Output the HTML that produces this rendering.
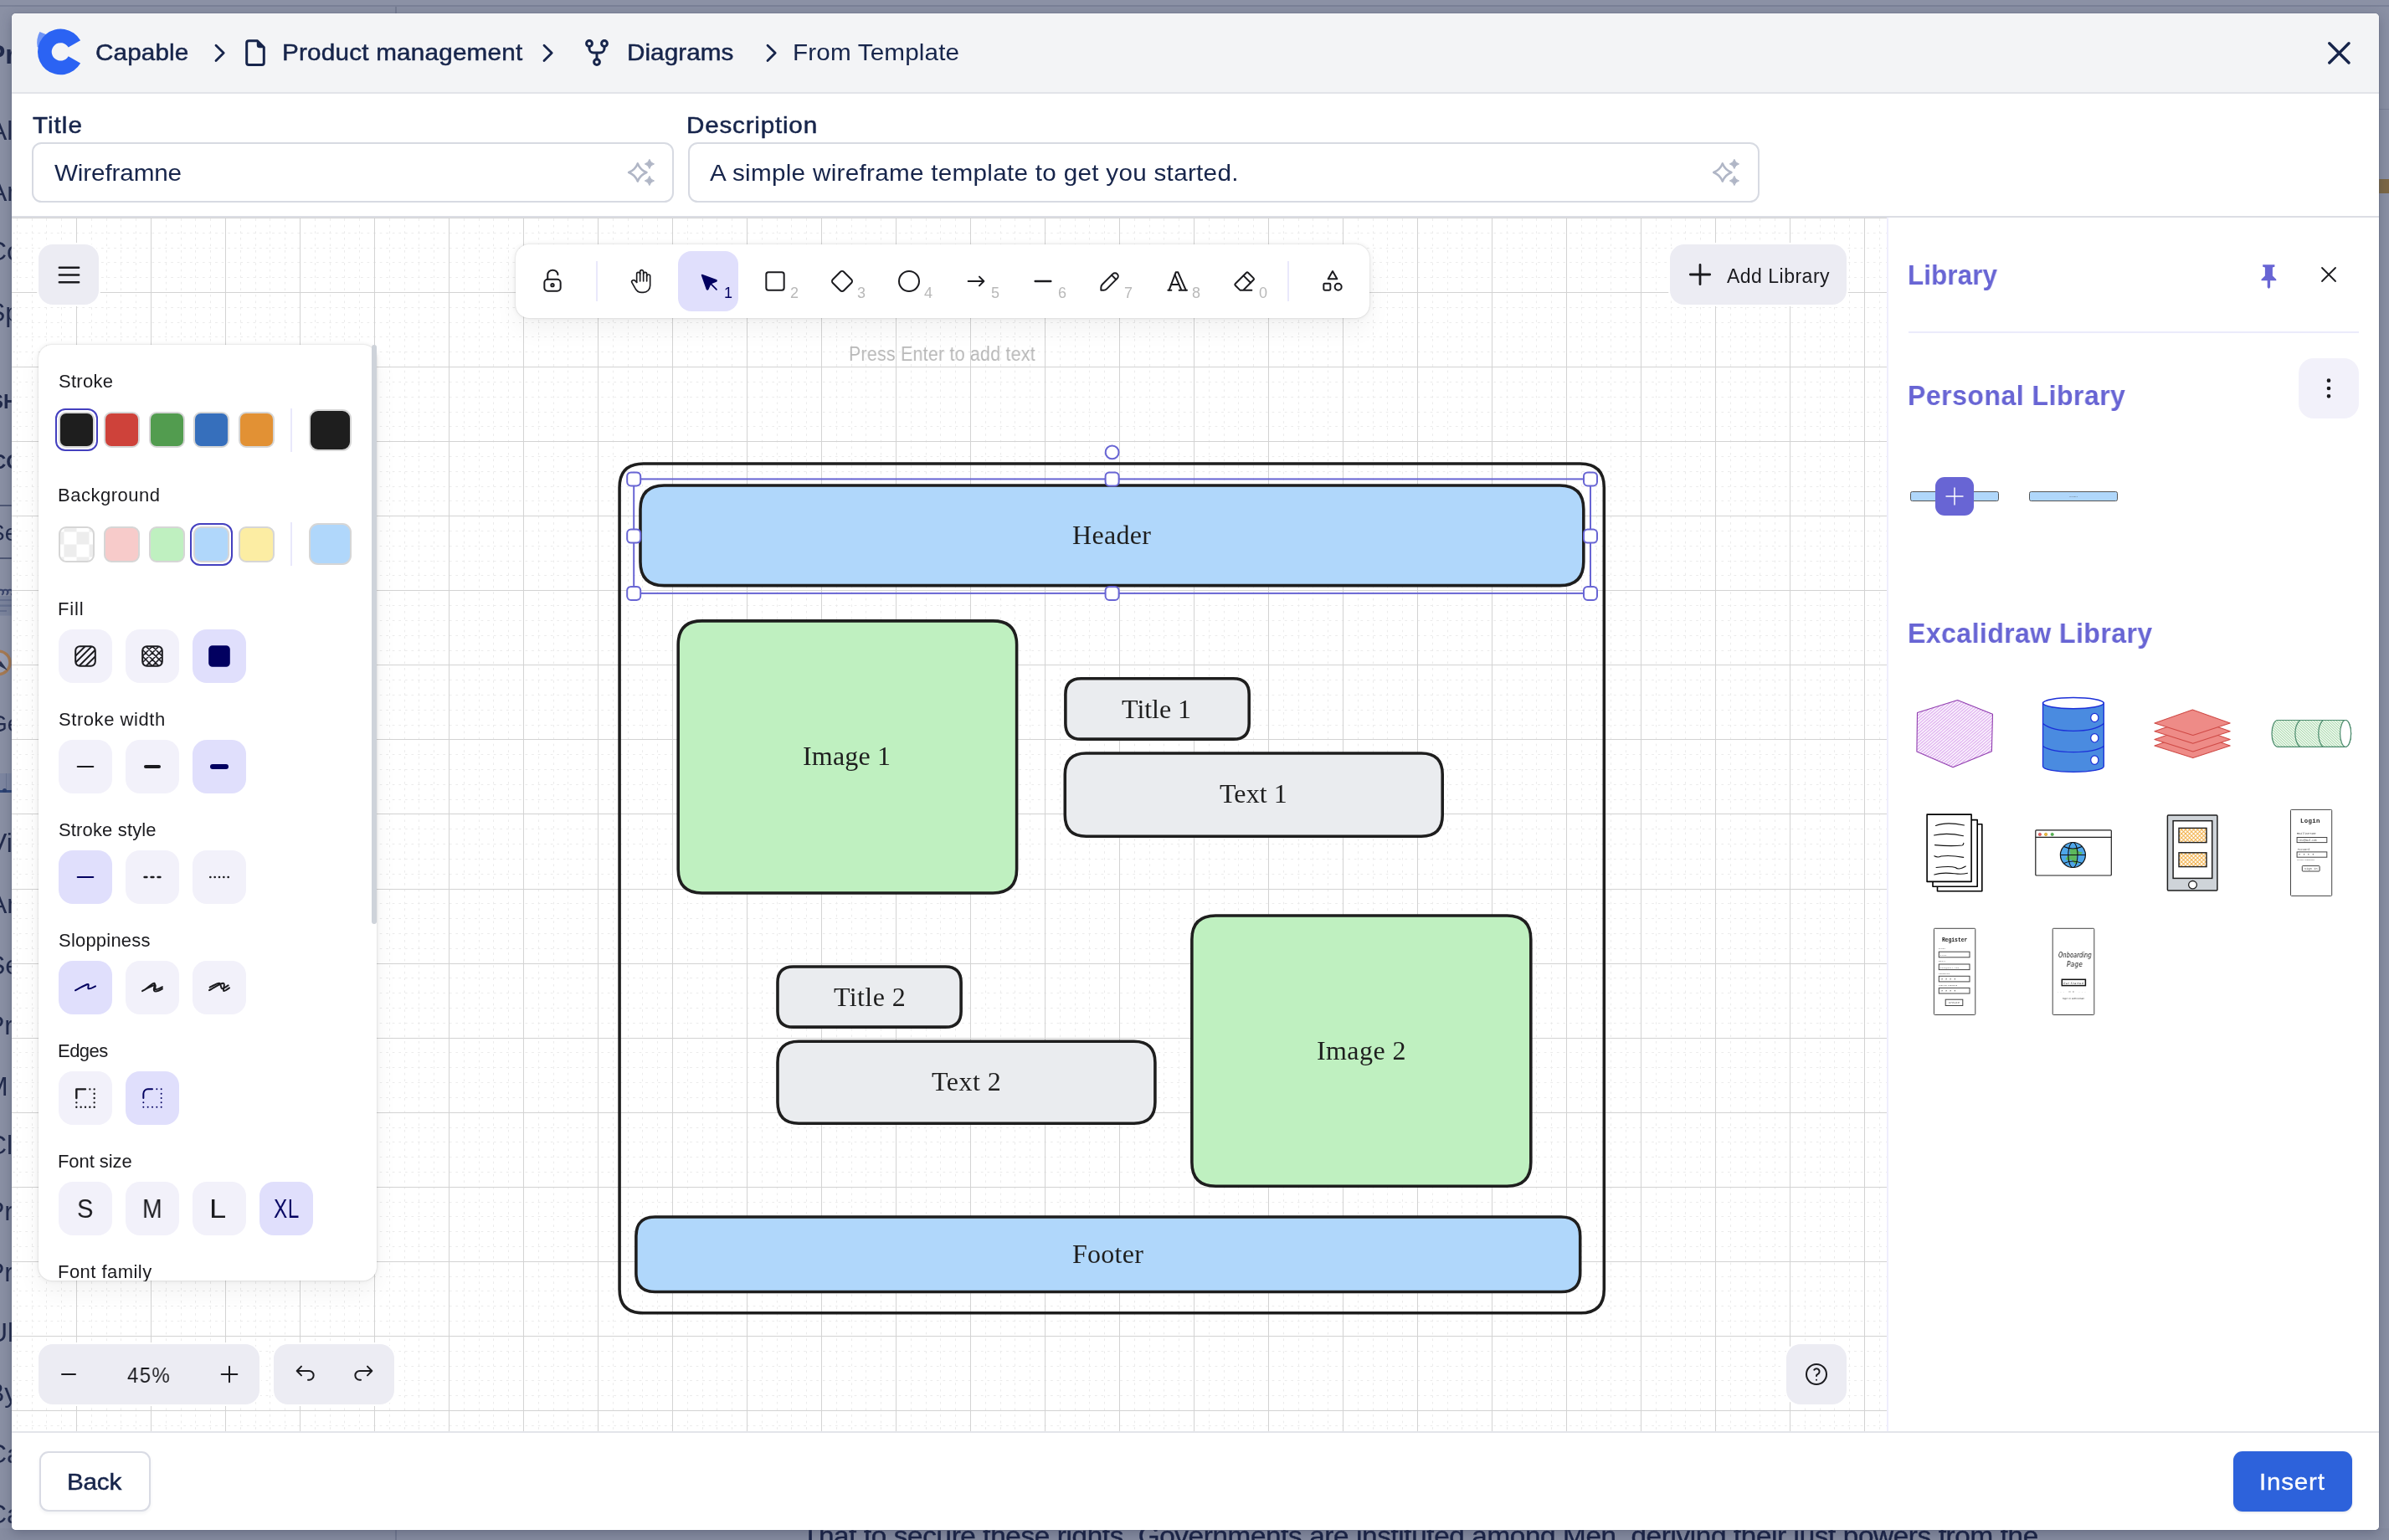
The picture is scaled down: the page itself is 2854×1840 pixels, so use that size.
<!DOCTYPE html>
<html lang="en"><head><meta charset="utf-8"><title>Capable - From Template</title>
<style>
html,body{margin:0;padding:0}
html{width:2854px;height:1840px;overflow:hidden}
#root{position:absolute;left:0;top:0;width:2854px;height:1840px;overflow:hidden}
body{width:2854px;height:1840px;overflow:hidden;background:#8a90a4;position:relative;font-family:"Liberation Sans",sans-serif}
.t{position:absolute;white-space:nowrap;will-change:transform}
svg{overflow:visible}
</style></head><body><div id="root">
<div style="position:absolute;left:0px;top:0px;width:2854px;height:1840px;background:#8a90a4;"></div>
<div style="position:absolute;left:0px;top:0px;width:2854px;height:6px;background:#8b91a5;"></div>
<div style="position:absolute;left:0px;top:6px;width:2854px;height:2px;background:#7a8197;"></div>
<div style="position:absolute;left:0px;top:1826px;width:2854px;height:14px;background:#868ca0;"></div>
<div style="position:absolute;left:472px;top:8px;width:2px;height:8px;background:#767d93;"></div>
<div style="position:absolute;left:472px;top:1828px;width:2px;height:12px;background:#727990;"></div>
<div style="position:absolute;left:2842px;top:130px;width:12px;height:1px;background:#7a8197;"></div>
<div style="position:absolute;left:2842px;top:214px;width:12px;height:17px;background:#7d6845;"></div>
<div style="position:absolute;left:0;top:0;width:14px;height:1840px;overflow:hidden">
<div class="t" style='left:-15.22px;top:46.00px;font-family:"Liberation Sans", sans-serif;font-size:32px;line-height:38px;color:#222b4c;font-weight:700;'>Pr</div>
<div class="t" style='left:-13.35px;top:137.00px;font-family:"Liberation Sans", sans-serif;font-size:32px;line-height:38px;color:#222b4c;'>Al</div>
<div class="t" style='left:-13.35px;top:209.50px;font-family:"Liberation Sans", sans-serif;font-size:32px;line-height:38px;color:#222b4c;'>Ar</div>
<div class="t" style='left:-14.66px;top:281.00px;font-family:"Liberation Sans", sans-serif;font-size:32px;line-height:38px;color:#222b4c;'>Co</div>
<div class="t" style='left:-14.77px;top:354.00px;font-family:"Liberation Sans", sans-serif;font-size:32px;line-height:38px;color:#222b4c;'>Sp</div>
<div class="t" style='left:-12.17px;top:465.00px;font-family:"Liberation Sans", sans-serif;font-size:24px;line-height:29px;color:#222b4c;font-weight:700;'>SH</div>
<div class="t" style='left:-10.13px;top:536.50px;font-family:"Liberation Sans", sans-serif;font-size:24px;line-height:29px;color:#222b4c;font-weight:700;'>CO</div>
<div style="position:absolute;left:0px;top:603px;width:14px;height:2px;background:#4f5875;"></div>
<div class="t" style='left:-12.52px;top:620.00px;font-family:"Liberation Sans", sans-serif;font-size:28px;line-height:34px;color:#222b4c;'>Se</div>
<div style="position:absolute;left:0px;top:666px;width:14px;height:2px;background:#4f5875;"></div>
<svg style="position:absolute;left:0px;top:700px;" width="14" height="40" viewBox="0 700 14 40"><path d="M-2 708a3 3 0 1 1 4 2.500M3.500 708a3 3 0 1 1 4 2.500M9 708a3 3 0 1 1 4 2.500" fill="none" stroke="#39446a" stroke-width="2"/><rect x="0" y="12" width="14" height="23.500" fill="#7b849c" transform="translate(0,700)"/><path d="M0 717H14M0 723.600H14M0 730H8" stroke="#66708e" stroke-width="2.200"/></svg>
<svg style="position:absolute;left:0px;top:770px;" width="14" height="44" viewBox="0 770 14 44"><circle cx="-1.800" cy="791.800" r="13.800" fill="#9ba1b5" stroke="#a67a52" stroke-width="3.400"/><path d="M-9 783L1 790L-3.500 794Z" fill="#b8324c"/><path d="M9 801L1 790L-3.500 794Z" fill="#2a3350"/></svg>
<div class="t" style='left:-13.47px;top:847.50px;font-family:"Liberation Sans", sans-serif;font-size:28px;line-height:34px;color:#222b4c;'>Ge</div>
<div style="position:absolute;left:0px;top:924px;width:14px;height:21px;background:#7d86a0;"></div>
<div style="position:absolute;left:6.5px;top:924px;width:1px;height:20px;background:#6c7692;"></div>
<div style="position:absolute;left:0px;top:944px;width:14px;height:2.5px;background:#2f4779;"></div>
<div style="position:absolute;left:3px;top:942px;width:5px;height:5px;background:#2b3f6e;border-radius:50%;"></div>
<div class="t" style='left:-13.41px;top:988.00px;font-family:"Liberation Sans", sans-serif;font-size:32px;line-height:38px;color:#222b4c;'>Vi</div>
<div class="t" style='left:-13.35px;top:1061.00px;font-family:"Liberation Sans", sans-serif;font-size:32px;line-height:38px;color:#222b4c;'>Ar</div>
<div class="t" style='left:-14.77px;top:1134.00px;font-family:"Liberation Sans", sans-serif;font-size:32px;line-height:38px;color:#222b4c;'>Se</div>
<div class="t" style='left:-15.66px;top:1206.00px;font-family:"Liberation Sans", sans-serif;font-size:32px;line-height:38px;color:#222b4c;'>Pr</div>
<div class="t" style='left:-16.66px;top:1279.00px;font-family:"Liberation Sans", sans-serif;font-size:32px;line-height:38px;color:#222b4c;'>M</div>
<div class="t" style='left:-14.66px;top:1349.00px;font-family:"Liberation Sans", sans-serif;font-size:32px;line-height:38px;color:#222b4c;'>Cl</div>
<div class="t" style='left:-15.66px;top:1428.00px;font-family:"Liberation Sans", sans-serif;font-size:32px;line-height:38px;color:#222b4c;'>Pr</div>
<div class="t" style='left:-15.66px;top:1501.00px;font-family:"Liberation Sans", sans-serif;font-size:32px;line-height:38px;color:#222b4c;'>Pr</div>
<div class="t" style='left:-14.50px;top:1573.00px;font-family:"Liberation Sans", sans-serif;font-size:32px;line-height:38px;color:#222b4c;'>Ul</div>
<div class="t" style='left:-15.66px;top:1645.00px;font-family:"Liberation Sans", sans-serif;font-size:32px;line-height:38px;color:#222b4c;'>By</div>
<div class="t" style='left:-14.66px;top:1718.00px;font-family:"Liberation Sans", sans-serif;font-size:32px;line-height:38px;color:#222b4c;'>Ca</div>
<div class="t" style='left:-14.66px;top:1790.00px;font-family:"Liberation Sans", sans-serif;font-size:32px;line-height:38px;color:#222b4c;'>Ca</div>
</div>
<div class="t" style='left:957.97px;top:1815.50px;font-family:"Liberation Sans", sans-serif;font-size:32px;line-height:38px;color:#1a2346;letter-spacing:-0.360px;-webkit-text-stroke:0.4px #1a2346;transform:scaleX(1.04);transform-origin:0 0;'>That to secure these rights, Governments are instituted among Men, deriving their just powers from the</div>
<div style="position:absolute;left:14px;top:16px;width:2828px;height:1812px;border-radius:5px;overflow:hidden;background:#fff;box-shadow:0 0 0 1px rgba(90,98,122,.25),0 4px 14px rgba(35,42,70,.30)">
<div style="position:absolute;left:-14px;top:-16px;width:2854px;height:1840px">
<div style="position:absolute;left:14px;top:16px;width:2828px;height:94px;background:#f3f4f6;"></div>
<div style="position:absolute;left:14px;top:110px;width:2828px;height:2px;background:#e2e4e9;"></div>
<svg style="position:absolute;left:0px;top:0px;" width="130" height="110" viewBox="0 0 130 110"><path d="M47.4 38.1L55.5 41.2L52 60L44.6 56Q43 46.5 47.4 38.1Z" fill="#6e94f6"/><path d="M96.13 48.20A27.4 27.4 0 1 0 96.13 75.60L81.67 67.25A10.7 10.7 0 1 1 81.67 56.55Z" fill="#2b63f3"/></svg>
<div class="t" style='left:113.64px;top:46.00px;font-family:"Liberation Sans", sans-serif;font-size:28px;line-height:34px;color:#17254b;letter-spacing:0.110px;-webkit-text-stroke:0.5px #17254b;transform:scaleX(1.06);transform-origin:0 0;'>Capable</div>
<svg style="position:absolute;left:256px;top:50px;" width="16" height="26" viewBox="0 0 16 26"><path d="M2 4.2L11.2 13.3L2 22.4" fill="none" stroke="#17254b" stroke-width="2.8" stroke-linecap="round" stroke-linejoin="round"/></svg>
<svg style="position:absolute;left:288px;top:42px;" width="34" height="42" viewBox="0 0 34 42"><path d="M6.7 9.2a2.5 2.5 0 0 1 2.5-2.5H19.5L27.3 14.5V33a2.5 2.5 0 0 1-2.5 2.5H9.2a2.5 2.5 0 0 1-2.5-2.5Z" fill="none" stroke="#17254b" stroke-width="3" stroke-linejoin="round"/><path d="M19.5 6.7L27.3 14.5H22a2.5 2.5 0 0 1-2.5-2.5Z" fill="#17254b" stroke="#17254b" stroke-width="1.5" stroke-linejoin="round"/></svg>
<div class="t" style='left:336.69px;top:46.00px;font-family:"Liberation Sans", sans-serif;font-size:28px;line-height:34px;color:#17254b;letter-spacing:0.189px;-webkit-text-stroke:0.5px #17254b;transform:scaleX(1.06);transform-origin:0 0;'>Product management</div>
<svg style="position:absolute;left:648px;top:50px;" width="16" height="26" viewBox="0 0 16 26"><path d="M2 4.2L11.2 13.3L2 22.4" fill="none" stroke="#17254b" stroke-width="2.8" stroke-linecap="round" stroke-linejoin="round"/></svg>
<svg style="position:absolute;left:694px;top:42px;" width="40" height="42" viewBox="0 0 40 42"><g fill="none" stroke="#17254b" stroke-width="3" stroke-linecap="round"><circle cx="10" cy="10" r="3.4"/><circle cx="28" cy="10" r="3.4"/><circle cx="19" cy="32.1" r="3.4"/><path d="M10 13.4V16a5 5 0 0 0 5 5H23a5 5 0 0 0 5-5V13.4M19 21V28.7"/></g></svg>
<div class="t" style='left:748.69px;top:46.00px;font-family:"Liberation Sans", sans-serif;font-size:28px;line-height:34px;color:#17254b;letter-spacing:0.045px;-webkit-text-stroke:0.5px #17254b;transform:scaleX(1.06);transform-origin:0 0;'>Diagrams</div>
<svg style="position:absolute;left:915px;top:50px;" width="16" height="26" viewBox="0 0 16 26"><path d="M2 4.2L11.2 13.3L2 22.4" fill="none" stroke="#17254b" stroke-width="2.8" stroke-linecap="round" stroke-linejoin="round"/></svg>
<div class="t" style='left:946.80px;top:46.00px;font-family:"Liberation Sans", sans-serif;font-size:28px;line-height:34px;color:#17254b;letter-spacing:0.137px;transform:scaleX(1.06);transform-origin:0 0;'>From Template</div>
<svg style="position:absolute;left:2776px;top:45px;" width="36" height="36" viewBox="0 0 36 36"><path d="M6.8 6.8L30 30M30 6.8L6.8 30" fill="none" stroke="#17254b" stroke-width="3.4" stroke-linecap="round"/></svg>
<div style="position:absolute;left:14px;top:112px;width:2828px;height:146px;background:#fff;"></div>
<div class="t" style='left:38.58px;top:132.80px;font-family:"Liberation Sans", sans-serif;font-size:28px;line-height:34px;color:#17254b;letter-spacing:0.930px;-webkit-text-stroke:0.5px #17254b;transform:scaleX(1.06);transform-origin:0 0;'>Title</div>
<div class="t" style='left:820.19px;top:132.80px;font-family:"Liberation Sans", sans-serif;font-size:28px;line-height:34px;color:#17254b;letter-spacing:0.724px;-webkit-text-stroke:0.5px #17254b;transform:scaleX(1.06);transform-origin:0 0;'>Description</div>
<div style="position:absolute;left:38px;top:170px;width:767px;height:72px;box-sizing:border-box;border:2px solid #d7dae2;border-radius:11.5px;background:#fff;"></div>
<div style="position:absolute;left:822px;top:170px;width:1280px;height:72px;box-sizing:border-box;border:2px solid #d7dae2;border-radius:11.5px;background:#fff;"></div>
<div class="t" style='left:64.83px;top:189.50px;font-family:"Liberation Sans", sans-serif;font-size:28px;line-height:34px;color:#17254b;letter-spacing:-0.131px;transform:scaleX(1.06);transform-origin:0 0;'>Wireframne</div>
<div class="t" style='left:848.43px;top:189.50px;font-family:"Liberation Sans", sans-serif;font-size:28px;line-height:34px;color:#17254b;letter-spacing:0.263px;transform:scaleX(1.06);transform-origin:0 0;'>A simple wireframe template to get you started.</div>
<svg style="position:absolute;left:740px;top:180px;" width="50" height="50" viewBox="0 0 50 50"><path d="M21.80 15.40Q24.77 23.03 32.40 26.00Q24.77 28.97 21.80 36.60Q18.83 28.97 11.20 26.00Q18.83 23.03 21.80 15.40Z" fill="none" stroke="#b0b6c6" stroke-width="2.6" stroke-linejoin="round"/><path d="M35.90 10.30Q37.02 14.78 41.50 15.90Q37.02 17.02 35.90 21.50Q34.78 17.02 30.30 15.90Q34.78 14.78 35.90 10.30Z" fill="#b0b6c6" stroke="#b0b6c6" stroke-width="1" stroke-linejoin="round"/><path d="M35.90 30.40Q37.02 34.88 41.50 36.00Q37.02 37.12 35.90 41.60Q34.78 37.12 30.30 36.00Q34.78 34.88 35.90 30.40Z" fill="#b0b6c6" stroke="#b0b6c6" stroke-width="1" stroke-linejoin="round"/></svg>
<svg style="position:absolute;left:2036px;top:180px;" width="50" height="50" viewBox="0 0 50 50"><path d="M21.80 15.40Q24.77 23.03 32.40 26.00Q24.77 28.97 21.80 36.60Q18.83 28.97 11.20 26.00Q18.83 23.03 21.80 15.40Z" fill="none" stroke="#b0b6c6" stroke-width="2.6" stroke-linejoin="round"/><path d="M35.90 10.30Q37.02 14.78 41.50 15.90Q37.02 17.02 35.90 21.50Q34.78 17.02 30.30 15.90Q34.78 14.78 35.90 10.30Z" fill="#b0b6c6" stroke="#b0b6c6" stroke-width="1" stroke-linejoin="round"/><path d="M35.90 30.40Q37.02 34.88 41.50 36.00Q37.02 37.12 35.90 41.60Q34.78 37.12 30.30 36.00Q34.78 34.88 35.90 30.40Z" fill="#b0b6c6" stroke="#b0b6c6" stroke-width="1" stroke-linejoin="round"/></svg>
<div style="position:absolute;left:14px;top:258px;width:2828px;height:2px;background:#dcdee4;"></div>
<svg style="position:absolute;left:14px;top:260px;" width="2240" height="1451" viewBox="14 260 2240 1451"><rect x="14" y="260" width="2240" height="1451" fill="#fff"/><path d="M20.5 260V1711M38.5 260V1711M55.5 260V1711M73.5 260V1711M109.5 260V1711M127.5 260V1711M144.5 260V1711M162.5 260V1711M198.5 260V1711M216.5 260V1711M233.5 260V1711M251.5 260V1711M287.5 260V1711M305.5 260V1711M322.5 260V1711M340.5 260V1711M376.5 260V1711M394.5 260V1711M411.5 260V1711M429.5 260V1711M465.5 260V1711M483.5 260V1711M500.5 260V1711M518.5 260V1711M554.5 260V1711M572.5 260V1711M589.5 260V1711M607.5 260V1711M643.5 260V1711M661.5 260V1711M678.5 260V1711M696.5 260V1711M732.5 260V1711M750.5 260V1711M767.5 260V1711M785.5 260V1711M821.5 260V1711M839.5 260V1711M856.5 260V1711M874.5 260V1711M910.5 260V1711M928.5 260V1711M945.5 260V1711M963.5 260V1711M999.5 260V1711M1017.5 260V1711M1034.5 260V1711M1052.5 260V1711M1088.5 260V1711M1106.5 260V1711M1123.5 260V1711M1141.5 260V1711M1177.5 260V1711M1195.5 260V1711M1212.5 260V1711M1230.5 260V1711M1266.5 260V1711M1284.5 260V1711M1301.5 260V1711M1319.5 260V1711M1355.5 260V1711M1373.5 260V1711M1390.5 260V1711M1408.5 260V1711M1444.5 260V1711M1462.5 260V1711M1479.5 260V1711M1497.5 260V1711M1533.5 260V1711M1551.5 260V1711M1568.5 260V1711M1586.5 260V1711M1622.5 260V1711M1640.5 260V1711M1657.5 260V1711M1675.5 260V1711M1711.5 260V1711M1729.5 260V1711M1746.5 260V1711M1764.5 260V1711M1800.5 260V1711M1818.5 260V1711M1835.5 260V1711M1853.5 260V1711M1889.5 260V1711M1907.5 260V1711M1924.5 260V1711M1942.5 260V1711M1978.5 260V1711M1996.5 260V1711M2013.5 260V1711M2031.5 260V1711M2067.5 260V1711M2085.5 260V1711M2102.5 260V1711M2120.5 260V1711M2156.5 260V1711M2174.5 260V1711M2191.5 260V1711M2209.5 260V1711M2245.5 260V1711M14 278.5H2254M14 296.5H2254M14 313.5H2254M14 331.5H2254M14 367.5H2254M14 385.5H2254M14 402.5H2254M14 420.5H2254M14 456.5H2254M14 474.5H2254M14 492.5H2254M14 509.5H2254M14 545.5H2254M14 563.5H2254M14 581.5H2254M14 598.5H2254M14 634.5H2254M14 652.5H2254M14 670.5H2254M14 687.5H2254M14 723.5H2254M14 741.5H2254M14 759.5H2254M14 777.5H2254M14 812.5H2254M14 830.5H2254M14 848.5H2254M14 866.5H2254M14 901.5H2254M14 919.5H2254M14 937.5H2254M14 955.5H2254M14 990.5H2254M14 1008.5H2254M14 1026.5H2254M14 1044.5H2254M14 1079.5H2254M14 1097.5H2254M14 1115.5H2254M14 1133.5H2254M14 1168.5H2254M14 1186.5H2254M14 1204.5H2254M14 1222.5H2254M14 1257.5H2254M14 1275.5H2254M14 1293.5H2254M14 1311.5H2254M14 1347.5H2254M14 1364.5H2254M14 1382.5H2254M14 1400.5H2254M14 1436.5H2254M14 1453.5H2254M14 1471.5H2254M14 1489.5H2254M14 1525.5H2254M14 1542.5H2254M14 1560.5H2254M14 1578.5H2254M14 1614.5H2254M14 1632.5H2254M14 1649.5H2254M14 1667.5H2254M14 1703.5H2254" fill="none" stroke="#ebebeb" stroke-width="1" stroke-dasharray="2.7 4.86" stroke-dashoffset="-1.2"/><path d="M91.5 260V1711M180.5 260V1711M269.5 260V1711M358.5 260V1711M447.5 260V1711M536.5 260V1711M625.5 260V1711M714.5 260V1711M803.5 260V1711M892.5 260V1711M981.5 260V1711M1070.5 260V1711M1159.5 260V1711M1248.5 260V1711M1337.5 260V1711M1426.5 260V1711M1515.5 260V1711M1604.5 260V1711M1693.5 260V1711M1782.5 260V1711M1871.5 260V1711M1960.5 260V1711M2049.5 260V1711M2138.5 260V1711M2227.5 260V1711M14 260.5H2254M14 349.5H2254M14 438.5H2254M14 527.5H2254M14 616.5H2254M14 705.5H2254M14 794.5H2254M14 883.5H2254M14 972.5H2254M14 1062.5H2254M14 1151.5H2254M14 1240.5H2254M14 1329.5H2254M14 1418.5H2254M14 1507.5H2254M14 1596.5H2254M14 1685.5H2254" fill="none" stroke="#d3d3d3" stroke-width="1"/><path d="M768.50 554.08H1887.90Q1916.32 554.08 1916.32 582.50V1540.40Q1916.32 1568.82 1887.90 1568.82H768.50Q740.08 1568.82 740.08 1540.40V582.50Q740.08 554.08 768.50 554.08Z" fill="none" stroke="#1e1e1e" stroke-width="3.56" stroke-linejoin="round"/><path d="M793.40 580.08H1863.40Q1891.82 580.08 1891.82 608.50V671.20Q1891.82 699.62 1863.40 699.62H793.40Q764.98 699.62 764.98 671.20V608.50Q764.98 580.08 793.40 580.08Z" fill="#b0d7fb" stroke="#1e1e1e" stroke-width="3.56" stroke-linejoin="round"/><path d="M838.60 741.88H1186.20Q1214.62 741.88 1214.62 770.30V1038.50Q1214.62 1066.92 1186.20 1066.92H838.60Q810.18 1066.92 810.18 1038.50V770.30Q810.18 741.88 838.60 741.88Z" fill="#bff0c0" stroke="#1e1e1e" stroke-width="3.56" stroke-linejoin="round"/><path d="M1291.60 810.78H1473.50Q1492.22 810.78 1492.22 829.50V864.40Q1492.22 883.12 1473.50 883.12H1291.60Q1272.88 883.12 1272.88 864.40V829.50Q1272.88 810.78 1291.60 810.78Z" fill="#eaecef" stroke="#1e1e1e" stroke-width="3.56" stroke-linejoin="round"/><path d="M1297.50 899.98H1698.00Q1723.22 899.98 1723.22 925.20V974.00Q1723.22 999.22 1698.00 999.22H1297.50Q1272.28 999.22 1272.28 974.00V925.20Q1272.28 899.98 1297.50 899.98Z" fill="#eaecef" stroke="#1e1e1e" stroke-width="3.56" stroke-linejoin="round"/><path d="M947.70 1154.98H1129.40Q1148.12 1154.98 1148.12 1173.70V1208.40Q1148.12 1227.12 1129.40 1227.12H947.70Q928.98 1227.12 928.98 1208.40V1173.70Q928.98 1154.98 947.70 1154.98Z" fill="#eaecef" stroke="#1e1e1e" stroke-width="3.56" stroke-linejoin="round"/><path d="M954.20 1244.18H1354.70Q1379.92 1244.18 1379.92 1269.40V1317.10Q1379.92 1342.32 1354.70 1342.32H954.20Q928.98 1342.32 928.98 1317.10V1269.40Q928.98 1244.18 954.20 1244.18Z" fill="#eaecef" stroke="#1e1e1e" stroke-width="3.56" stroke-linejoin="round"/><path d="M1452.30 1094.08H1800.40Q1828.82 1094.08 1828.82 1122.50V1388.80Q1828.82 1417.22 1800.40 1417.22H1452.30Q1423.88 1417.22 1423.88 1388.80V1122.50Q1423.88 1094.08 1452.30 1094.08Z" fill="#bff0c0" stroke="#1e1e1e" stroke-width="3.56" stroke-linejoin="round"/><path d="M782.60 1454.08H1865.00Q1887.72 1454.08 1887.72 1476.80V1520.80Q1887.72 1543.52 1865.00 1543.52H782.60Q759.88 1543.52 759.88 1520.80V1476.80Q759.88 1454.08 782.60 1454.08Z" fill="#b0d7fb" stroke="#1e1e1e" stroke-width="3.56" stroke-linejoin="round"/><rect x="757.2" y="572.4" width="1142.8" height="136.5" fill="none" stroke="#6865d4" stroke-width="2"/><rect x="749.2" y="564.4" width="16" height="16" rx="4.6" fill="#fff" stroke="#6865d4" stroke-width="2"/><rect x="1320.6" y="564.4" width="16" height="16" rx="4.6" fill="#fff" stroke="#6865d4" stroke-width="2"/><rect x="1892.0" y="564.4" width="16" height="16" rx="4.6" fill="#fff" stroke="#6865d4" stroke-width="2"/><rect x="749.2" y="632.6" width="16" height="16" rx="4.6" fill="#fff" stroke="#6865d4" stroke-width="2"/><rect x="1892.0" y="632.6" width="16" height="16" rx="4.6" fill="#fff" stroke="#6865d4" stroke-width="2"/><rect x="749.2" y="700.9" width="16" height="16" rx="4.6" fill="#fff" stroke="#6865d4" stroke-width="2"/><rect x="1320.6" y="700.9" width="16" height="16" rx="4.6" fill="#fff" stroke="#6865d4" stroke-width="2"/><rect x="1892.0" y="700.9" width="16" height="16" rx="4.6" fill="#fff" stroke="#6865d4" stroke-width="2"/><circle cx="1328.6" cy="540.4" r="7.9" fill="#fff" stroke="#6865d4" stroke-width="2"/></svg>
<div class="t" style='left:1280.80px;top:620.20px;font-family:"Liberation Serif", serif;font-size:32px;line-height:38px;color:#1e1e1e;letter-spacing:0.330px;'>Header</div>
<div class="t" style='left:959.03px;top:884.00px;font-family:"Liberation Serif", serif;font-size:32px;line-height:38px;color:#1e1e1e;letter-spacing:0.178px;'>Image 1</div>
<div class="t" style='left:1339.99px;top:827.90px;font-family:"Liberation Serif", serif;font-size:32px;line-height:38px;color:#1e1e1e;letter-spacing:-0.040px;'>Title 1</div>
<div class="t" style='left:1456.59px;top:928.90px;font-family:"Liberation Serif", serif;font-size:32px;line-height:38px;color:#1e1e1e;letter-spacing:0.058px;'>Text 1</div>
<div class="t" style='left:996.29px;top:1171.50px;font-family:"Liberation Serif", serif;font-size:32px;line-height:38px;color:#1e1e1e;letter-spacing:0.389px;'>Title 2</div>
<div class="t" style='left:1113.19px;top:1273.10px;font-family:"Liberation Serif", serif;font-size:32px;line-height:38px;color:#1e1e1e;letter-spacing:0.465px;'>Text 2</div>
<div class="t" style='left:1573.23px;top:1236.20px;font-family:"Liberation Serif", serif;font-size:32px;line-height:38px;color:#1e1e1e;letter-spacing:0.407px;'>Image 2</div>
<div class="t" style='left:1280.80px;top:1478.90px;font-family:"Liberation Serif", serif;font-size:32px;line-height:38px;color:#1e1e1e;letter-spacing:0.251px;'>Footer</div>
<div style="position:absolute;left:46px;top:292px;width:72px;height:72px;background:#ececf3;border-radius:17px;box-shadow:0 0 0 2px #fff;"></div>
<svg style="position:absolute;left:64.5px;top:310.5px" width="35" height="35" viewBox="0 0 24 24" fill="none" stroke="#1b1b1f" stroke-width="1.7" stroke-linecap="round" stroke-linejoin="round"><path d="M4 6H20M4 12H20M4 18H20"/></svg>
<div style="position:absolute;left:616px;top:292px;width:1020px;height:88px;background:#fff;border-radius:16px;box-shadow:0 0 1.9px rgba(0,0,0,.17),0 0 6.3px rgba(0,0,0,.08),0 14px 28px rgba(0,0,0,.05);"></div>
<div style="position:absolute;left:712.3px;top:312px;width:1.6px;height:48px;background:#e9e8fb;"></div>
<div style="position:absolute;left:1538.1px;top:312px;width:1.6px;height:48px;background:#e9e8fb;"></div>
<div style="position:absolute;left:810px;top:300px;width:72px;height:72px;background:#e0dffc;border-radius:16px;"></div>
<svg style="position:absolute;left:644.0px;top:320.0px" width="32" height="32" viewBox="0 0 20 20" fill="none" stroke="#1b1b1f" stroke-width="1.25" stroke-linecap="round" stroke-linejoin="round"><rect x="3.96" y="8.54" width="12.08" height="8.75" rx="2.5"/><circle cx="10" cy="12.92" r="1.04"/><path d="M6.4 8.54V5.18c0-.93.4-1.82 1.12-2.48A3.98 3.98 0 0 1 10.21 1.67c1.01 0 1.98.37 2.69 1.03.72.65 1.12 1.55 1.12 2.48"/></svg>
<svg style="position:absolute;left:750.0px;top:320.0px" width="32" height="32" viewBox="0 0 24 24" fill="none" stroke="#1b1b1f" stroke-width="1.25" stroke-linecap="round" stroke-linejoin="round"><path d="M8 13v-7.5a1.5 1.5 0 0 1 3 0v6.5"/><path d="M11 5.5v-2a1.5 1.5 0 1 1 3 0v8.500"/><path d="M14 5.5a1.5 1.5 0 0 1 3 0v6.500"/><path d="M17 7.5a1.5 1.5 0 0 1 3 0v8.500a6 6 0 0 1 -6 6h-2h.208a6 6 0 0 1 -5.012 -2.700a69.740 69.740 0 0 1 -.196 -.300c-.312 -.479 -1.407 -2.388 -3.286 -5.728a1.500 1.500 0 0 1 .536 -2.022a1.867 1.867 0 0 1 2.280 .280l1.470 1.470"/></svg>
<svg style="position:absolute;left:830.4px;top:320.1px" width="34.6" height="34.6" viewBox="0 0 24 24" fill="none" stroke="#020060" stroke-width="1.25" stroke-linecap="round" stroke-linejoin="round"><path d="M6 6l4.153 11.793a0.365 .365 0 0 0 .331 .207a0.366 .366 0 0 0 .332 -.207l2.184 -4.793l4.787 -1.994a0.355 .355 0 0 0 .213 -.323a0.355 .355 0 0 0 -.213 -.323l-11.787 -4.360z" fill="#020060"/><path d="M13.5 13.5l4.500 4.500"/></svg>
<svg style="position:absolute;left:910.0px;top:320.0px" width="32" height="32" viewBox="0 0 24 24" fill="none" stroke="#1b1b1f" stroke-width="1.5" stroke-linecap="round" stroke-linejoin="round"><rect x="4" y="4" width="16" height="16" rx="2"/></svg>
<svg style="position:absolute;left:990.0px;top:320.0px" width="32" height="32" viewBox="0 0 24 24" fill="none" stroke="#1b1b1f" stroke-width="1.5" stroke-linecap="round" stroke-linejoin="round"><path d="M10.5 20.4l-6.900 -6.900c-.781 -.781 -.781 -2.219 0 -3l6.900 -6.900c.781 -.781 2.219 -.781 3 0l6.900 6.900c.781 .781 .781 2.219 0 3l-6.900 6.900c-.781 .781 -2.219 .781 -3 0z"/></svg>
<svg style="position:absolute;left:1070.0px;top:320.0px" width="32" height="32" viewBox="0 0 24 24" fill="none" stroke="#1b1b1f" stroke-width="1.5" stroke-linecap="round" stroke-linejoin="round"><circle cx="12" cy="12" r="9"/></svg>
<svg style="position:absolute;left:1150.0px;top:320.0px" width="32" height="32" viewBox="0 0 24 24" fill="none" stroke="#1b1b1f" stroke-width="1.5" stroke-linecap="round" stroke-linejoin="round"><path d="M5 12H19M15 16L19 12M15 8L19 12"/></svg>
<svg style="position:absolute;left:1230.0px;top:320.0px" width="32" height="32" viewBox="0 0 20 20" fill="none" stroke="#1b1b1f" stroke-width="1.5" stroke-linecap="round" stroke-linejoin="round"><path d="M4.167 10h11.666"/></svg>
<svg style="position:absolute;left:1310.0px;top:320.0px" width="32" height="32" viewBox="0 0 20 20" fill="none" stroke="#1b1b1f" stroke-width="1.25" stroke-linecap="round" stroke-linejoin="round"><path d="m7.643 15.690 7.774-7.773a2.357 2.357 0 1 0-3.334-3.334L4.310 12.357a3.333 3.333 0 0 0-.977 2.357v1.953h1.953c.884 0 1.732-.352 2.357-.977Z"/><path d="m11.250 5.417 3.333 3.333"/></svg>
<svg style="position:absolute;left:1390.0px;top:320.0px" width="32" height="32" viewBox="0 0 24 24" fill="none" stroke="#1b1b1f" stroke-width="1.5" stroke-linecap="round" stroke-linejoin="round"><path d="M4 20H7M14 20H21M6.900 15H13.800M10.200 6.300L16 20"/><polyline points="5 20 11 4 13 4 20 20"/></svg>
<svg style="position:absolute;left:1470.0px;top:320.0px" width="32" height="32" viewBox="0 0 24 24" fill="none" stroke="#1b1b1f" stroke-width="1.5" stroke-linecap="round" stroke-linejoin="round"><path d="M19 20h-10.500l-4.210 -4.300a1 1 0 0 1 0 -1.410l10 -10a1 1 0 0 1 1.410 0l5 5a1 1 0 0 1 0 1.410l-9.200 9.300"/><path d="M18 13.300l-6.300 -6.300"/></svg>
<svg style="position:absolute;left:1576.0px;top:320.0px" width="32" height="32" viewBox="0 0 24 24" fill="none" stroke="#1b1b1f" stroke-width="1.5" stroke-linecap="round" stroke-linejoin="round"><path d="M12 3l-4 7h8z"/><circle cx="17" cy="17" r="3"/><rect x="4" y="14" width="6" height="6" rx="1"/></svg>
<div class="t" style='left:864.88px;top:338.70px;font-family:"Liberation Sans", sans-serif;font-size:18px;line-height:22px;color:#020060;'>1</div>
<div class="t" style='left:943.61px;top:338.70px;font-family:"Liberation Sans", sans-serif;font-size:18px;line-height:22px;color:#b8b8b8;'>2</div>
<div class="t" style='left:1023.92px;top:338.70px;font-family:"Liberation Sans", sans-serif;font-size:18px;line-height:22px;color:#b8b8b8;'>3</div>
<div class="t" style='left:1104.05px;top:338.70px;font-family:"Liberation Sans", sans-serif;font-size:18px;line-height:22px;color:#b8b8b8;'>4</div>
<div class="t" style='left:1183.81px;top:338.70px;font-family:"Liberation Sans", sans-serif;font-size:18px;line-height:22px;color:#b8b8b8;'>5</div>
<div class="t" style='left:1263.69px;top:338.70px;font-family:"Liberation Sans", sans-serif;font-size:18px;line-height:22px;color:#b8b8b8;'>6</div>
<div class="t" style='left:1343.41px;top:338.70px;font-family:"Liberation Sans", sans-serif;font-size:18px;line-height:22px;color:#b8b8b8;'>7</div>
<div class="t" style='left:1423.65px;top:338.70px;font-family:"Liberation Sans", sans-serif;font-size:18px;line-height:22px;color:#b8b8b8;'>8</div>
<div class="t" style='left:1504.09px;top:338.70px;font-family:"Liberation Sans", sans-serif;font-size:18px;line-height:22px;color:#b8b8b8;'>0</div>
<div class="t" style='left:1014.06px;top:409.00px;font-family:"Liberation Sans", sans-serif;font-size:23px;line-height:28px;color:#b8b8b8;letter-spacing:0.246px;transform:scaleX(0.93);transform-origin:0 0;'>Press Enter to add text</div>
<div style="position:absolute;left:1995px;top:292px;width:211px;height:72px;background:#ececf3;border-radius:17px;box-shadow:0 0 0 2px #fff;"></div>
<svg style="position:absolute;left:2013.0px;top:310.0px" width="36" height="36" viewBox="0 0 24 24" fill="none" stroke="#1b1b1f" stroke-width="1.85" stroke-linecap="round" stroke-linejoin="round"><path d="M12 4.200V19.800M4.200 12H19.800"/></svg>
<div class="t" style='left:2063.38px;top:315.50px;font-family:"Liberation Sans", sans-serif;font-size:23px;line-height:28px;color:#1b1b1f;letter-spacing:0.493px;'>Add Library</div>
<div style="position:absolute;left:46px;top:1606px;width:264px;height:72px;background:#ececf3;border-radius:17px;box-shadow:0 0 0 2px #fff;"></div>
<svg style="position:absolute;left:66.0px;top:1626.0px" width="32" height="32" viewBox="0 0 20 20" fill="none" stroke="#1b1b1f" stroke-width="1.25" stroke-linecap="round" stroke-linejoin="round"><path d="M5 10h10"/></svg>
<svg style="position:absolute;left:258.0px;top:1626.0px" width="32" height="32" viewBox="0 0 20 20" fill="none" stroke="#1b1b1f" stroke-width="1.25" stroke-linecap="round" stroke-linejoin="round"><path d="M10 4.167v11.666M4.167 10h11.666"/></svg>
<div class="t" style='left:152.42px;top:1628.20px;font-family:"Liberation Sans", sans-serif;font-size:26px;line-height:31px;color:#1b1b1f;letter-spacing:1.569px;transform:scaleX(0.92);transform-origin:0 0;'>45%</div>
<div style="position:absolute;left:327px;top:1606px;width:144px;height:72px;background:#ececf3;border-radius:17px;box-shadow:0 0 0 2px #fff;"></div>
<svg style="position:absolute;left:347.5px;top:1626.0px" width="32" height="32" viewBox="0 0 20 20" fill="none" stroke="#1b1b1f" stroke-width="1.25" stroke-linecap="round" stroke-linejoin="round"><path d="M7.500 10.833 4.167 7.500 7.500 4.167M4.167 7.500h9.166a3.333 3.333 0 0 1 0 6.667H12.500"/></svg>
<svg style="position:absolute;left:418.5px;top:1626.0px" width="32" height="32" viewBox="0 0 20 20" fill="none" stroke="#1b1b1f" stroke-width="1.25" stroke-linecap="round" stroke-linejoin="round"><path d="M12.500 10.833 15.833 7.500 12.500 4.167M15.833 7.500H6.667a3.333 3.333 0 1 0 0 6.667H7.500"/></svg>
<div style="position:absolute;left:2134px;top:1606px;width:72px;height:72px;background:#ececf3;border-radius:17px;box-shadow:0 0 0 2px #fff;"></div>
<svg style="position:absolute;left:2154.0px;top:1626.0px" width="32" height="32" viewBox="0 0 24 24" fill="none" stroke="#1b1b1f" stroke-width="1.5" stroke-linecap="round" stroke-linejoin="round"><circle cx="12" cy="12" r="9"/><path d="M12 17V17.010"/><path d="M12 13.500a1.500 1.500 0 0 1 1 -1.500a2.600 2.600 0 1 0 -3 -4"/></svg>
<div style="position:absolute;left:46px;top:412px;width:404px;height:1118px;background:#fff;border-radius:16px;box-shadow:0 0 1.9px rgba(0,0,0,.17),0 0 6.3px rgba(0,0,0,.08),0 14px 28px rgba(0,0,0,.05);"></div>
<div class="t" style='left:69.53px;top:442.70px;font-family:"Liberation Sans", sans-serif;font-size:22px;line-height:26px;color:#1b1b1f;letter-spacing:0.286px;'>Stroke</div>
<div class="t" style='left:69.03px;top:579.10px;font-family:"Liberation Sans", sans-serif;font-size:22px;line-height:26px;color:#1b1b1f;letter-spacing:0.515px;'>Background</div>
<div class="t" style='left:69.03px;top:714.80px;font-family:"Liberation Sans", sans-serif;font-size:22px;line-height:26px;color:#1b1b1f;letter-spacing:0.881px;'>Fill</div>
<div class="t" style='left:69.53px;top:846.90px;font-family:"Liberation Sans", sans-serif;font-size:22px;line-height:26px;color:#1b1b1f;letter-spacing:0.557px;'>Stroke width</div>
<div class="t" style='left:69.53px;top:978.60px;font-family:"Liberation Sans", sans-serif;font-size:22px;line-height:26px;color:#1b1b1f;letter-spacing:0.151px;'>Stroke style</div>
<div class="t" style='left:69.53px;top:1110.90px;font-family:"Liberation Sans", sans-serif;font-size:22px;line-height:26px;color:#1b1b1f;letter-spacing:0.209px;'>Sloppiness</div>
<div class="t" style='left:69.03px;top:1242.60px;font-family:"Liberation Sans", sans-serif;font-size:22px;line-height:26px;color:#1b1b1f;letter-spacing:-0.540px;'>Edges</div>
<div class="t" style='left:69.03px;top:1375.00px;font-family:"Liberation Sans", sans-serif;font-size:22px;line-height:26px;color:#1b1b1f;letter-spacing:-0.071px;'>Font size</div>
<div class="t" style='left:69.03px;top:1506.60px;font-family:"Liberation Sans", sans-serif;font-size:22px;line-height:26px;color:#1b1b1f;letter-spacing:0.458px;clip-path:inset(0 0 2.8px 0);'>Font family</div>
<div style="position:absolute;left:69.7px;top:492.2px;width:43px;height:43px;box-sizing:border-box;border:2px solid #d6d6d6;border-radius:9px;background:#1e1e1e;"></div>
<div style="position:absolute;left:65.7px;top:488.2px;width:51px;height:51px;box-sizing:border-box;border:2px solid #4440bf;border-radius:12px;"></div>
<div style="position:absolute;left:123.7px;top:492.2px;width:43px;height:43px;box-sizing:border-box;border:2px solid #d6d6d6;border-radius:9px;background:#ce423a;"></div>
<div style="position:absolute;left:177.7px;top:492.2px;width:43px;height:43px;box-sizing:border-box;border:2px solid #d6d6d6;border-radius:9px;background:#529c4f;"></div>
<div style="position:absolute;left:231.3px;top:492.2px;width:43px;height:43px;box-sizing:border-box;border:2px solid #d6d6d6;border-radius:9px;background:#366fbc;"></div>
<div style="position:absolute;left:285.3px;top:492.2px;width:43px;height:43px;box-sizing:border-box;border:2px solid #d6d6d6;border-radius:9px;background:#e29134;"></div>
<div style="position:absolute;left:347px;top:488px;width:2px;height:52px;background:#e9e8fb;"></div>
<div style="position:absolute;left:369px;top:488.5px;width:50.5px;height:50.5px;box-sizing:border-box;border:2px solid #d6d6d6;border-radius:11px;background:#1e1e1e;"></div>
<div style="position:absolute;left:69.7px;top:628.5px;width:43px;height:43px;box-sizing:border-box;border:2px solid #d6d6d6;border-radius:9px;background:#fff conic-gradient(#ededed 25%,#fff 0 50%,#ededed 0 75%,#fff 0) 0 0/30px 30px;background-position:4.5px 4.5px;"></div>
<div style="position:absolute;left:123.7px;top:628.5px;width:43px;height:43px;box-sizing:border-box;border:2px solid #d6d6d6;border-radius:9px;background:#f7cbca;"></div>
<div style="position:absolute;left:177.7px;top:628.5px;width:43px;height:43px;box-sizing:border-box;border:2px solid #d6d6d6;border-radius:9px;background:#bff0c0;"></div>
<div style="position:absolute;left:231.3px;top:628.5px;width:43px;height:43px;box-sizing:border-box;border:2px solid #d6d6d6;border-radius:9px;background:#b0d7fb;"></div>
<div style="position:absolute;left:227.3px;top:624.5px;width:51px;height:51px;box-sizing:border-box;border:2px solid #4440bf;border-radius:12px;"></div>
<div style="position:absolute;left:285.3px;top:628.5px;width:43px;height:43px;box-sizing:border-box;border:2px solid #d6d6d6;border-radius:9px;background:#fceda3;"></div>
<div style="position:absolute;left:347px;top:624px;width:2px;height:52px;background:#e9e8fb;"></div>
<div style="position:absolute;left:369px;top:624.7px;width:50.5px;height:50.5px;box-sizing:border-box;border:2px solid #d6d6d6;border-radius:11px;background:#b0d7fb;"></div>
<div style="position:absolute;left:70px;top:752.2px;width:64px;height:64px;background:#f2f1fa;border-radius:17px;"></div>
<svg style="position:absolute;left:86.0px;top:768.2px" width="32" height="32" viewBox="0 0 20 20" fill="none" stroke="#1b1b1f" stroke-width="1.25" stroke-linecap="round" stroke-linejoin="round"><defs><clipPath id="hc1"><path d="M5.879 2.625h8.242a3.254 3.254 0 0 1 3.254 3.254v8.242a3.254 3.254 0 0 1-3.254 3.254H5.880a3.254 3.254 0 0 1-3.254-3.254V5.880a3.254 3.254 0 0 1 3.254-3.254Z"/></clipPath></defs><path d="M5.879 2.625h8.242a3.254 3.254 0 0 1 3.254 3.254v8.242a3.254 3.254 0 0 1-3.254 3.254H5.880a3.254 3.254 0 0 1-3.254-3.254V5.880a3.254 3.254 0 0 1 3.254-3.254Z"/><g clip-path="url(#hc1)"><path d="M2.258 15.156 15.156 2.258M7.324 20.222 20.222 7.325m-20.444 5.350L12.675-.222m-8.157 18.340L17.416 5.220"/></g></svg>
<div style="position:absolute;left:150px;top:752.2px;width:64px;height:64px;background:#f2f1fa;border-radius:17px;"></div>
<svg style="position:absolute;left:166.0px;top:768.2px" width="32" height="32" viewBox="0 0 20 20" fill="none" stroke="#1b1b1f" stroke-width="1.25" stroke-linecap="round" stroke-linejoin="round"><defs><clipPath id="hc2"><path d="M5.879 2.625h8.242a3.254 3.254 0 0 1 3.254 3.254v8.242a3.254 3.254 0 0 1-3.254 3.254H5.880a3.254 3.254 0 0 1-3.254-3.254V5.880a3.254 3.254 0 0 1 3.254-3.254Z"/></clipPath></defs><path d="M5.879 2.625h8.242a3.254 3.254 0 0 1 3.254 3.254v8.242a3.254 3.254 0 0 1-3.254 3.254H5.880a3.254 3.254 0 0 1-3.254-3.254V5.880a3.254 3.254 0 0 1 3.254-3.254Z"/><g clip-path="url(#hc2)" stroke-width="0.95"><path d="M2.426 15.044 15.044 2.426M7.383 20 20 7.383M0 12.617 12.617 0m-7.980 17.941L17.256 5.324m-2.211 12.250L2.426 4.956M20 12.617 7.383 0m5.234 20L0 7.383m17.941 7.980L5.324 2.745"/></g></svg>
<div style="position:absolute;left:230px;top:752.2px;width:64px;height:64px;background:#e0dffc;border-radius:17px;"></div>
<svg style="position:absolute;left:246.0px;top:768.2px" width="32" height="32" viewBox="0 0 20 20" fill="none" stroke="#020060" stroke-width="1.25" stroke-linecap="round" stroke-linejoin="round"><path d="M4.910 2.625h10.180a2.284 2.284 0 0 1 2.285 2.284v10.182a2.284 2.284 0 0 1-2.284 2.284H4.909a2.284 2.284 0 0 1-2.284-2.284V4.909a2.284 2.284 0 0 1 2.284-2.284Z" fill="#020060"/></svg>
<div style="position:absolute;left:70px;top:884.2px;width:64px;height:64px;background:#f2f1fa;border-radius:17px;"></div>
<svg style="position:absolute;left:86.0px;top:900.2px" width="32" height="32" viewBox="0 0 20 20" fill="none" stroke="#1b1b1f" stroke-width="1.25" stroke-linecap="round" stroke-linejoin="round"><path d="M4.167 10h11.666"/></svg>
<div style="position:absolute;left:150px;top:884.2px;width:64px;height:64px;background:#f2f1fa;border-radius:17px;"></div>
<svg style="position:absolute;left:166.0px;top:900.2px" width="32" height="32" viewBox="0 0 20 20" fill="none" stroke="#1b1b1f" stroke-width="2.5" stroke-linecap="round" stroke-linejoin="round"><path d="M5 10h10"/></svg>
<div style="position:absolute;left:230px;top:884.2px;width:64px;height:64px;background:#e0dffc;border-radius:17px;"></div>
<svg style="position:absolute;left:246.0px;top:900.2px" width="32" height="32" viewBox="0 0 20 20" fill="none" stroke="#020060" stroke-width="3.75" stroke-linecap="round" stroke-linejoin="round"><path d="M5 10h10"/></svg>
<div style="position:absolute;left:70px;top:1016px;width:64px;height:64px;background:#e0dffc;border-radius:17px;"></div>
<svg style="position:absolute;left:86.0px;top:1032.0px" width="32" height="32" viewBox="0 0 20 20" fill="none" stroke="#020060" stroke-width="1.25" stroke-linecap="round" stroke-linejoin="round"><path d="M4.167 10h11.666"/></svg>
<div style="position:absolute;left:150px;top:1016px;width:64px;height:64px;background:#f2f1fa;border-radius:17px;"></div>
<svg style="position:absolute;left:166.0px;top:1032.0px" width="32" height="32" viewBox="0 0 24 24" fill="none" stroke="#1b1b1f" stroke-width="2" stroke-linecap="round" stroke-linejoin="round"><path d="M5 12h2M17 12h2M11 12h2"/></svg>
<div style="position:absolute;left:230px;top:1016px;width:64px;height:64px;background:#f2f1fa;border-radius:17px;"></div>
<svg style="position:absolute;left:246.0px;top:1032.0px" width="32" height="32" viewBox="0 0 24 24" fill="none" stroke="#1b1b1f" stroke-width="2" stroke-linecap="round" stroke-linejoin="round"><path d="M4 12v.01M8 12v.01M12 12v.01M16 12v.01M20 12v.01"/></svg>
<div style="position:absolute;left:70px;top:1148.2px;width:64px;height:64px;background:#e0dffc;border-radius:17px;"></div>
<svg style="position:absolute;left:86.0px;top:1164.2px" width="32" height="32" viewBox="0 0 20 20" fill="none" stroke="#020060" stroke-width="1.25" stroke-linecap="round" stroke-linejoin="round"><path d="M2.500 12.038c1.655-.885 5.900-3.292 8.568-4.354 2.668-1.063.101 2.821 1.320 3.104 1.218.283 5.112-1.814 5.112-1.814"/></svg>
<div style="position:absolute;left:150px;top:1148.2px;width:64px;height:64px;background:#f2f1fa;border-radius:17px;"></div>
<svg style="position:absolute;left:166.0px;top:1164.2px" width="32" height="32" viewBox="0 0 20 20" fill="none" stroke="#1b1b1f" stroke-width="1.25" stroke-linecap="round" stroke-linejoin="round"><path d="M2.500 12.563c1.655-.886 5.900-3.293 8.568-4.355 2.668-1.062.101 2.822 1.320 3.105 1.218.283 5.112-1.814 5.112-1.814m-13.469 2.230c2.963-1.586 6.130-5.620 7.468-4.998 1.338.623-1.153 4.110-.132 5.595 1.020 1.487 6.133-1.430 6.133-1.430"/></svg>
<div style="position:absolute;left:230px;top:1148.2px;width:64px;height:64px;background:#f2f1fa;border-radius:17px;"></div>
<svg style="position:absolute;left:246.0px;top:1164.2px" width="32" height="32" viewBox="0 0 20 20" fill="none" stroke="#1b1b1f" stroke-width="1.25" stroke-linecap="round" stroke-linejoin="round"><path d="M2.500 11.936c1.737-.879 8.627-5.346 10.420-5.268 1.795.078-.418 5.138.345 5.736.763.598 3.530-1.789 4.235-2.147M2.929 9.788c1.164-.519 5.470-3.280 6.987-3.114 1.519.165 1 3.827 2.121 4.109 1.122.281 3.839-2.016 4.606-2.420"/></svg>
<div style="position:absolute;left:70px;top:1280.2px;width:64px;height:64px;background:#f2f1fa;border-radius:17px;"></div>
<svg style="position:absolute;left:86.0px;top:1296.2px" width="32" height="32" viewBox="0 0 20 20" fill="none" stroke="#1b1b1f" stroke-width="1.5" stroke-linecap="round" stroke-linejoin="round"><path d="M3.333 10V3.333H10"/><path d="M13.333 3.333v.01M16.667 3.333v.01M16.667 6.667v.01M16.667 10v.01M3.333 13.333v.01M16.667 13.333v.01M3.333 16.667v.01M6.667 16.667v.01M10 16.667v.01M13.333 16.667v.01M16.667 16.667v.01"/></svg>
<div style="position:absolute;left:150px;top:1280.2px;width:64px;height:64px;background:#e0dffc;border-radius:17px;"></div>
<svg style="position:absolute;left:166.0px;top:1296.2px" width="32" height="32" viewBox="0 0 24 24" fill="none" stroke="#020060" stroke-width="1.5" stroke-linecap="round" stroke-linejoin="round"><path d="M4 12v-4a4 4 0 0 1 4 -4h4"/><path d="M16 4v.01M20 4v.01M20 8v.01M20 12v.01M4 16v.01M20 16v.01M4 20v.01M8 20v.01M12 20v.01M16 20v.01M20 20v.01"/></svg>
<div style="position:absolute;left:70px;top:1412.2px;width:64px;height:64px;background:#f2f1fa;border-radius:17px;"></div>
<div class="t" style='left:92.38px;top:1426.00px;font-family:"Liberation Sans", sans-serif;font-size:31px;line-height:37px;color:#1b1b1f;transform:scaleX(0.9375000000000003);transform-origin:0 0;'>S</div>
<div style="position:absolute;left:150px;top:1412.2px;width:64px;height:64px;background:#f2f1fa;border-radius:17px;"></div>
<div class="t" style='left:169.93px;top:1426.00px;font-family:"Liberation Sans", sans-serif;font-size:31px;line-height:37px;color:#1b1b1f;transform:scaleX(0.9179231059178284);transform-origin:0 0;'>M</div>
<div style="position:absolute;left:230px;top:1412.2px;width:64px;height:64px;background:#f2f1fa;border-radius:17px;"></div>
<div class="t" style='left:250.38px;top:1426.00px;font-family:"Liberation Sans", sans-serif;font-size:31px;line-height:37px;color:#1b1b1f;transform:scaleX(1.1703249714937287);transform-origin:0 0;'>L</div>
<div style="position:absolute;left:310px;top:1412.2px;width:64px;height:64px;background:#e0dffc;border-radius:17px;"></div>
<div class="t" style='left:326.58px;top:1426.00px;font-family:"Liberation Sans", sans-serif;font-size:31px;line-height:37px;color:#020060;letter-spacing:0.813px;transform:scaleX(0.78);transform-origin:0 0;'>XL</div>
<div style="position:absolute;left:444px;top:412px;width:6px;height:692px;background:#ced3da;border-radius:3px;"></div>
<div style="position:absolute;left:2254px;top:260px;width:588px;height:1451px;background:#fff;"></div>
<div style="position:absolute;left:2254px;top:260px;width:2px;height:1451px;background:#efeefd;"></div>
<div class="t" style='left:2278.83px;top:308.70px;font-family:"Liberation Sans", sans-serif;font-size:33px;line-height:40px;color:#6865d4;font-weight:700;letter-spacing:0.118px;transform:scaleX(0.95);transform-origin:0 0;'>Library</div>
<svg style="position:absolute;left:2698px;top:312px;" width="26" height="34" viewBox="0 0 26 34"><path d="M5.200 4.300H19.400V6.800L16.900 7.600V17.600L21.300 21.800V23.300H14.100V31.200L12.400 33L10.700 31.200V23.300H3.500V21.800L7.900 17.600V7.600L5.200 6.800Z" fill="#6865d4"/></svg>
<svg style="position:absolute;left:2766.0px;top:312.0px" width="32" height="32" viewBox="0 0 24 24" fill="none" stroke="#1b1b1f" stroke-width="1.35" stroke-linecap="round" stroke-linejoin="round"><path d="M18 6L6 18M6 6L18 18"/></svg>
<div style="position:absolute;left:2280px;top:396px;width:538px;height:2px;background:#ebebfb;"></div>
<div class="t" style='left:2278.78px;top:452.80px;font-family:"Liberation Sans", sans-serif;font-size:33px;line-height:40px;color:#6865d4;font-weight:700;letter-spacing:0.502px;transform:scaleX(0.97);transform-origin:0 0;'>Personal Library</div>
<div style="position:absolute;left:2746px;top:428px;width:72px;height:72px;background:#f2f1fa;border-radius:18px;"></div>
<svg style="position:absolute;left:2766.0px;top:448.0px" width="32" height="32" viewBox="0 0 24 24" fill="none" stroke="#1b1b1f" stroke-width="1.5" stroke-linecap="round" stroke-linejoin="round"><circle cx="12" cy="12" r="1" fill="#1b1b1f"/><circle cx="12" cy="19" r="1" fill="#1b1b1f"/><circle cx="12" cy="5" r="1" fill="#1b1b1f"/></svg>
<div style="position:absolute;left:2282.2px;top:586.8px;width:105.4px;height:12.4px;box-sizing:border-box;background:#b0d7fb;border:1px solid #555;border-radius:2.5px;"></div>
<div style="position:absolute;left:2312px;top:570px;width:46px;height:46px;background:#6865d4;border-radius:11px;"></div>
<svg style="position:absolute;left:2319.0px;top:577.0px" width="32" height="32" viewBox="0 0 24 24" fill="none" stroke="#fff" stroke-width="1.1" stroke-linecap="round" stroke-linejoin="round"><path d="M12 4.500V19.500M4.500 12H19.500"/></svg>
<div style="position:absolute;left:2424.4px;top:586.8px;width:105.5px;height:12.4px;box-sizing:border-box;background:#b0d7fb;border:1px solid #555;border-radius:2.5px;"></div>
<div class="t" style='left:2472.27px;top:591.60px;font-family:"Liberation Serif", serif;font-size:2.6px;line-height:3px;color:#333;letter-spacing:0.493px;'>Header</div>
<div class="t" style='left:2279.38px;top:737.20px;font-family:"Liberation Sans", sans-serif;font-size:33px;line-height:40px;color:#6865d4;font-weight:700;letter-spacing:0.455px;transform:scaleX(0.97);transform-origin:0 0;'>Excalidraw Library</div>
<svg style="position:absolute;left:2254px;top:800px;" width="588" height="440" viewBox="2254 800 588 440"><defs><pattern id="hp" width="2.75" height="2.75" patternUnits="userSpaceOnUse" patternTransform="rotate(-41)"><rect width="2.75" height="2.75" fill="#fff"/><rect width="2.75" height="1.3" fill="#dca9ee"/></pattern><pattern id="hg" width="2.3" height="2.3" patternUnits="userSpaceOnUse" patternTransform="rotate(43)"><rect width="2.3" height="2.3" fill="#fff"/><rect width="2.3" height="1.1" fill="#a6d8a9"/></pattern><pattern id="ho" width="3.4" height="3.4" patternUnits="userSpaceOnUse" patternTransform="rotate(45)"><rect width="3.4" height="3.4" fill="#fff"/><rect width="3.4" height="1.1" fill="#f3b452"/><rect width="1.1" height="3.4" fill="#f3b452"/></pattern></defs><path d="M2338.6 836.5L2380.5 853.2L2379.4 897.8L2333.1 916.8L2289.9 898.1L2290.5 851.6Z" fill="url(#hp)" stroke="#903daf" stroke-width="1.1" stroke-linejoin="round"/><path d="M2440.5 840V915.5C2440.5 919.500 2456.500 922.300 2477 922.300S2513.300 919.500 2513.300 915.500V840Z" fill="#4a8be0" stroke="#1b2fd8" stroke-width="1.3"/><ellipse cx="2476.9" cy="840.1" rx="36.4" ry="6.6" fill="#fff" stroke="#1b2fd8" stroke-width="1.5"/><path d="M2440.5 864.5C2448 870.500 2462 873.300 2477 873.300S2506 870.500 2513.300 864.500M2440.500 891.500C2448 896.500 2462 898.600 2477 898.600S2506 896.500 2513.300 891.500" fill="none" stroke="#1b2fd8" stroke-width="1.3"/><ellipse cx="2502.3" cy="857.5" rx="4.6" ry="5.2" fill="#fff" stroke="#1b2fd8" stroke-width="1.2"/><ellipse cx="2502.3" cy="881.8" rx="4.6" ry="5.2" fill="#fff" stroke="#1b2fd8" stroke-width="1.2"/><ellipse cx="2502.3" cy="908.1" rx="4.6" ry="5.2" fill="#fff" stroke="#1b2fd8" stroke-width="1.2"/><path d="M2573.9 891.1L2619.3 875.3L2664.2 891.1L2619.8 905.6Z" fill="#ee8b87" stroke="#cf4a46" stroke-width="1.1" stroke-linejoin="round"/><path d="M2573.9 883.5L2619.3 867.7L2664.2 883.5L2619.8 898.0Z" fill="#ee8b87" stroke="#cf4a46" stroke-width="1.1" stroke-linejoin="round"/><path d="M2573.9 873.7L2619.3 857.9L2664.2 873.7L2619.8 888.2Z" fill="#ee8b87" stroke="#cf4a46" stroke-width="1.1" stroke-linejoin="round"/><path d="M2573.9 863.9L2619.3 848.1L2664.2 863.9L2619.8 878.4Z" fill="#ee8b87" stroke="#cf4a46" stroke-width="1.1" stroke-linejoin="round"/><path d="M2721 860.5H2802C2806 860.500 2808.600 868 2808.600 876.400S2806 892.300 2802 892.300H2721C2717 892.300 2714 885 2714 876.400S2717 860.500 2721 860.500Z" fill="url(#hg)" stroke="#4a8a6c" stroke-width="1.2"/><ellipse cx="2802.1" cy="876.4" rx="6.5" ry="15.9" fill="#fff" stroke="#4a8a6c" stroke-width="1.2"/><path d="M2747.500 860.500C2740 868 2740 885 2747.500 892.300M2775 860.500C2768 868 2768 885 2775 892.300" fill="none" stroke="#4a8a6c" stroke-width="1.2"/><g fill="#fff" stroke="#000" stroke-width="1.6" stroke-linejoin="round"><rect x="2314.5" y="984.8" width="53.3" height="79.9"/><rect x="2309" y="979.6" width="53.2" height="79.6"/><rect x="2302.1" y="973.1" width="53" height="80.3"/></g><path d="M2312.500 986.500Q2325 981.500 2346.500 986M2310.500 998Q2326 994.500 2345.500 998.700M2311.500 1009.600Q2330 1011.500 2344 1010Q2346 1009.500 2345.800 1007.400M2310.800 1022.800Q2315 1025 2319 1023Q2330 1021.500 2345.700 1024.400M2313 1036.500Q2330 1034.500 2336 1036.500Q2340 1040 2348.300 1035M2310.800 1045Q2320 1042 2335 1043.800Q2344 1045 2350.500 1043.300" fill="none" stroke="#111" stroke-width="1.1" stroke-linecap="round"/><rect x="2431.8" y="991.8" width="90.5" height="54.2" rx="1" fill="#fff" stroke="#1e1e1e" stroke-width="1.2"/><path d="M2431.800 1000.300H2522.300" stroke="#1e1e1e" stroke-width="1.2"/><circle cx="2436.9" cy="996.9" r="1.7" fill="#ef5a5a" stroke="#a33" stroke-width=".5"/><circle cx="2444.1" cy="996.9" r="1.7" fill="#f5b83d" stroke="#a80" stroke-width=".5"/><circle cx="2451.7" cy="996.9" r="1.7" fill="#55b84f" stroke="#383" stroke-width=".5"/><circle cx="2476.4" cy="1021.5" r="15" fill="#4ea6ea" stroke="#111" stroke-width="1.2"/><path d="M2472.500 1014.500L2480 1013.500L2483.500 1017.500L2488 1018.500L2486 1021L2481 1020.500L2480.500 1026L2483 1031L2478.500 1032L2474.500 1027L2471 1028.500L2467.500 1026.500L2469.500 1023L2473.500 1022Z" fill="#5cb85c"/><g fill="none" stroke="#111" stroke-width="1.1"><ellipse cx="2476.4" cy="1021.5" rx="5.6" ry="15"/><path d="M2461.400 1021.500H2491.400M2465.500 1011.500Q2476.400 1016.500 2487.300 1011.500M2465.500 1031.500Q2476.400 1026.500 2487.300 1031.500"/></g><rect x="2589.4" y="973.9" width="59.5" height="90" rx="1" fill="#cfd4d9" stroke="#1e1e1e" stroke-width="1.5"/><rect x="2596.1" y="980.7" width="46.6" height="68.7" fill="#fff" stroke="#1e1e1e" stroke-width="1.5"/><rect x="2603" y="989.4" width="33" height="17.2" fill="url(#ho)" stroke="#1e1e1e" stroke-width="1.4"/><rect x="2603" y="1018.8" width="33" height="16.8" fill="url(#ho)" stroke="#1e1e1e" stroke-width="1.4"/><ellipse cx="2619.5" cy="1057.2" rx="4.9" ry="4.7" fill="#fff" stroke="#1e1e1e" stroke-width="1.3"/><rect x="2736.5" y="967.4" width="49.2" height="103" rx="1" fill="#fff" stroke="#444" stroke-width="1"/><rect x="2744.1" y="1000.5" width="35.7" height="6.1" fill="#fff" stroke="#444" stroke-width="1"/><rect x="2744.1" y="1017.9" width="35.7" height="6.3" fill="#fff" stroke="#444" stroke-width="1"/><rect x="2750.3" y="1034.5" width="20.8" height="6.5" rx="0.8" fill="#fff" stroke="#444" stroke-width="1"/><rect x="2310.4" y="1109.3" width="49.4" height="103.2" rx="1" fill="#fff" stroke="#444" stroke-width="1"/><rect x="2316.3" y="1137.2" width="36.7" height="6.6" fill="#fff" stroke="#444" stroke-width="1"/><rect x="2316.3" y="1152" width="36.7" height="6.6" fill="#fff" stroke="#444" stroke-width="1"/><rect x="2316.3" y="1166.3" width="36.7" height="6.6" fill="#fff" stroke="#444" stroke-width="1"/><rect x="2316.3" y="1180.4" width="36.7" height="6.6" fill="#fff" stroke="#444" stroke-width="1"/><rect x="2324.2" y="1194.2" width="20.6" height="7.3" fill="#fff" stroke="#444" stroke-width="1"/><rect x="2452.2" y="1109.3" width="49.6" height="103.2" rx="1" fill="#fff" stroke="#444" stroke-width="1"/><rect x="2463.3" y="1170.3" width="28.1" height="7.3" fill="#fff" stroke="#111" stroke-width="1.5"/></svg>
<div class="t" style='left:2747.74px;top:977.00px;font-family:"Liberation Mono", monospace;font-size:7.4px;line-height:9px;color:#222;font-weight:700;letter-spacing:0.338px;'>Login</div>
<div class="t" style='left:2743.77px;top:995.20px;font-family:"Liberation Mono", monospace;font-size:2.7px;line-height:3px;color:#444;letter-spacing:-0.007px;'>Email/Username</div>
<div class="t" style='left:2745.80px;top:1003.00px;font-family:"Liberation Mono", monospace;font-size:2.7px;line-height:3px;color:#444;letter-spacing:0.023px;'>test@mail.com</div>
<div class="t" style='left:2744.53px;top:1014.20px;font-family:"Liberation Mono", monospace;font-size:2.7px;line-height:3px;color:#444;letter-spacing:0.156px;'>Password</div>
<div class="t" style='left:2746.31px;top:1020.30px;font-family:"Liberation Mono", monospace;font-size:3.6px;line-height:4px;color:#333;font-weight:700;letter-spacing:0.537px;'>* * * *</div>
<div class="t" style='left:2744.29px;top:1026.20px;font-family:"Liberation Mono", monospace;font-size:2.4px;line-height:3px;color:#555;letter-spacing:-0.142px;'>forgot password?</div>
<div class="t" style='left:2753.31px;top:1036.20px;font-family:"Liberation Mono", monospace;font-size:3.4px;line-height:4px;color:#444;letter-spacing:0.223px;'>Sign in</div>
<div class="t" style='left:2320.43px;top:1119.90px;font-family:"Liberation Mono", monospace;font-size:6.4px;line-height:8px;color:#222;font-weight:700;letter-spacing:-0.054px;'>Register</div>
<div class="t" style='left:2316.38px;top:1131.90px;font-family:"Liberation Mono", monospace;font-size:2.4px;line-height:3px;color:#444;letter-spacing:0.766px;'>Name</div>
<div class="t" style='left:2318.33px;top:1139.60px;font-family:"Liberation Mono", monospace;font-size:2.4px;line-height:3px;color:#555;letter-spacing:0.473px;'>test</div>
<div class="t" style='left:2316.43px;top:1146.80px;font-family:"Liberation Mono", monospace;font-size:2.4px;line-height:3px;color:#444;letter-spacing:0.333px;'>Email</div>
<div class="t" style='left:2318.33px;top:1154.60px;font-family:"Liberation Mono", monospace;font-size:2.4px;line-height:3px;color:#555;letter-spacing:0.278px;'>test@mail.com</div>
<div class="t" style='left:2316.31px;top:1161.70px;font-family:"Liberation Mono", monospace;font-size:2.4px;line-height:3px;color:#444;letter-spacing:0.210px;'>Password</div>
<div class="t" style='left:2319.31px;top:1168.80px;font-family:"Liberation Mono", monospace;font-size:3.6px;line-height:4px;color:#333;font-weight:700;letter-spacing:0.371px;'>* * * *</div>
<div class="t" style='left:2316.32px;top:1175.80px;font-family:"Liberation Mono", monospace;font-size:2.4px;line-height:3px;color:#444;letter-spacing:-0.048px;'>Confirm Password</div>
<div class="t" style='left:2319.31px;top:1182.80px;font-family:"Liberation Mono", monospace;font-size:3.6px;line-height:4px;color:#333;font-weight:700;letter-spacing:0.371px;'>* * * *</div>
<div class="t" style='left:2328.34px;top:1196.20px;font-family:"Liberation Mono", monospace;font-size:3.4px;line-height:4px;color:#444;letter-spacing:0.145px;'>Create</div>
<div class="t" style='left:2458.61px;top:1135.50px;font-family:"DejaVu Sans", sans-serif;font-size:8.2px;line-height:10px;color:#111;letter-spacing:0.016px;font-style:italic;transform:scaleX(0.82);transform-origin:0 0;'>Onboarding</div>
<div class="t" style='left:2469.21px;top:1147.40px;font-family:"DejaVu Sans", sans-serif;font-size:8.2px;line-height:10px;color:#111;letter-spacing:0.361px;font-style:italic;transform:scaleX(0.88);transform-origin:0 0;'>Page</div>
<div class="t" style='left:2465.32px;top:1172.60px;font-family:"DejaVu Sans", sans-serif;font-size:3.2px;line-height:4px;color:#222;letter-spacing:0.541px;font-style:italic;'>Get Started</div>
<div class="t" style='left:2458.34px;top:1184.40px;font-family:"DejaVu Sans", sans-serif;font-size:2.6px;line-height:3px;color:#777;letter-spacing:2.474px;'>--- OR ---</div>
<div class="t" style='left:2464.31px;top:1191.90px;font-family:"DejaVu Sans", sans-serif;font-size:2.8px;line-height:3px;color:#333;letter-spacing:0.027px;font-style:italic;'>Sign in with Gmail</div>
<div style="position:absolute;left:14px;top:1710px;width:2828px;height:2px;background:#e3e5ea;"></div>
<div style="position:absolute;left:14px;top:1712px;width:2828px;height:116px;background:#fff;"></div>
<div style="position:absolute;left:46.5px;top:1734px;width:133.5px;height:71.7px;box-sizing:border-box;border:2px solid #d9dbe4;border-radius:11px;background:#fff;box-shadow:0 2px 4px rgba(20,30,60,.06);"></div>
<div class="t" style='left:79.69px;top:1754.00px;font-family:"Liberation Sans", sans-serif;font-size:28px;line-height:34px;color:#17254b;letter-spacing:-0.208px;-webkit-text-stroke:0.5px #17254b;transform:scaleX(1.06);transform-origin:0 0;'>Back</div>
<div style="position:absolute;left:2668px;top:1734px;width:142px;height:72px;border-radius:11px;background:#2d62db;box-shadow:0 1px 3px rgba(20,30,60,.15);"></div>
<div class="t" style='left:2699.22px;top:1754.00px;font-family:"Liberation Sans", sans-serif;font-size:28px;line-height:34px;color:#fff;letter-spacing:0.695px;-webkit-text-stroke:0.3px #fff;transform:scaleX(1.06);transform-origin:0 0;'>Insert</div>
</div></div>
</div></body></html>
